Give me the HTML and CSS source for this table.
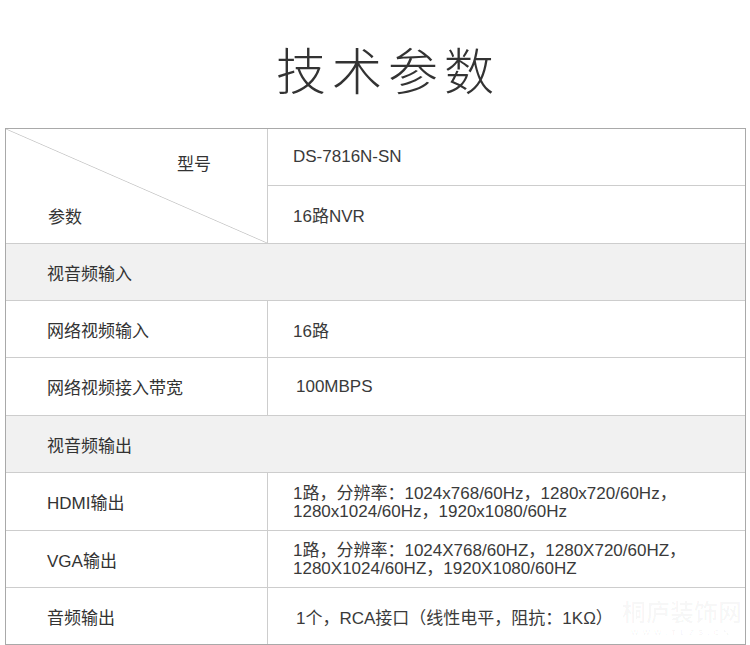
FILE: index.html
```html
<!DOCTYPE html>
<html lang="zh-CN">
<head>
<meta charset="utf-8">
<title>技术参数</title>
<link rel="stylesheet" href="styles.css">
</head>
<body>
<h1 class="title">技术参数</h1>
<div class="spec">
  <div class="corner">
    <span class="corner-top">型号</span>
    <span class="corner-bottom">参数</span>
  </div>
  <div class="val">DS-7816N-SN</div>
  <div class="val">16路NVR</div>

  <div class="section">视音频输入</div>

  <div class="label">网络视频输入</div>
  <div class="val">16路</div>

  <div class="label">网络视频接入带宽</div>
  <div class="val indent">100MBPS</div>

  <div class="section">视音频输出</div>

  <div class="label">HDMI输出</div>
  <div class="val multi">1路，分辨率：1024x768/60Hz，1280x720/60Hz，<br>1280x1024/60Hz，1920x1080/60Hz</div>

  <div class="label">VGA输出</div>
  <div class="val multi">1路，分辨率：1024X768/60HZ，1280X720/60HZ，<br>1280X1024/60HZ，1920X1080/60HZ</div>

  <div class="label">音频输出</div>
  <div class="val indent">1个，RCA接口（线性电平，阻抗：1KΩ）</div>

  <div class="watermark">
    <span class="wm-name">桐庐装饰网</span>
    <span class="wm-url">WWW.TLZS.CN</span>
  </div>
</div>
</body>
</html>
```
FILE: styles.css
```css
html, body {
  margin: 0;
  padding: 0;
  background: #ffffff;
}

body {
  width: 750px;
  height: 645px;
  overflow: hidden;
  font-family: "Liberation Sans", "Noto Sans CJK SC", sans-serif;
  color: #333333;
}

.title {
  margin: 0;
  padding: 43px 0 0 26px;
  height: 128px;
  box-sizing: border-box;
  text-align: center;
  font-family: "Noto Sans CJK SC", sans-serif;
  font-weight: 300;
  font-size: 50px;
  line-height: 50px;
  letter-spacing: 6px;
  color: #333333;
}

.spec {
  position: relative;
  margin-left: 5px;
  width: 741px;
  box-sizing: border-box;
  border: 1px solid #a9a9a9;
  display: grid;
  grid-template-columns: 261px 1fr;
  grid-template-rows: 56px 57px 56px 56px 57px 56px 57px 56px 56px;
  gap: 1px;
  background: #cdcdcd;
}

.spec > div {
  background: #ffffff;
}

.corner {
  grid-row: span 2;
  display: flex;
  flex-direction: column;
  justify-content: space-between;
  padding: 27px 0 16px 42px;
  font-size: 17px;
  line-height: 18px;
  background: linear-gradient(to top right, #ffffff calc(50% - 0.8px), #cccccc 50%, #ffffff calc(50% + 0.8px)) !important;
}

.corner-top {
  margin-left: 129px;
}

.label {
  display: flex;
  align-items: center;
  padding-left: 41px;
  font-size: 17px;
}

.section {
  grid-column: span 2;
  display: flex;
  align-items: center;
  padding-left: 41px;
  font-size: 17px;
  background: #f1f1f1 !important;
}

.val {
  display: flex;
  align-items: center;
  padding-left: 25px;
  font-size: 17px;
  color: #3a3a3a;
}

.val.indent {
  padding-left: 28px;
}

.val.multi {
  line-height: 18px;
  padding-top: 2px;
}

.watermark {
  position: absolute;
  right: 3px;
  bottom: 6px;
  display: flex;
  flex-direction: column;
  align-items: center;
  background: transparent !important;
  pointer-events: none;
}

.wm-name {
  font-family: "Noto Sans CJK SC", serif;
  font-weight: 700;
  font-size: 24px;
  line-height: 26px;
  color: rgba(0, 0, 0, 0.03);
}

.wm-url {
  font-family: "Liberation Sans", sans-serif;
  font-weight: 700;
  font-size: 8px;
  letter-spacing: 4px;
  line-height: 10px;
  margin-top: 4px;
  color: rgba(0, 0, 0, 0.035);
}
```
